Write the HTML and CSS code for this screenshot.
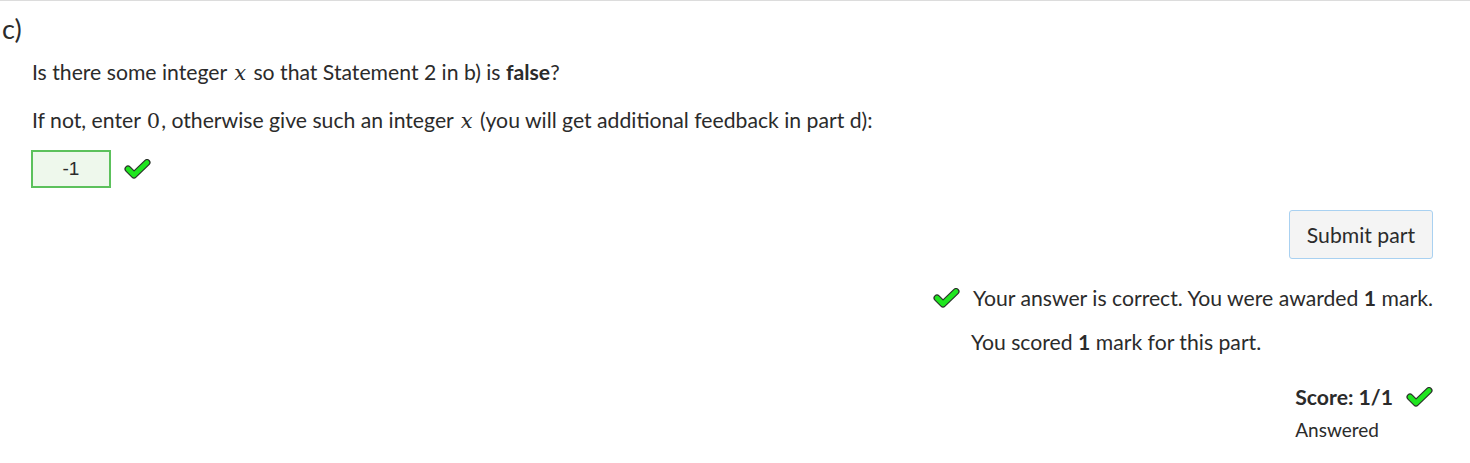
FILE: index.html
```html
<!DOCTYPE html>
<html>
<head>
<meta charset="utf-8">
<link rel="stylesheet" href="styles.css">
</head>
<body>
<div class="part">
  <h3 class="part-name">c)</h3>
  <div class="prompt">
    <p class="para">Is there some integer <span class="math">x</span> so that Statement 2 in b) is <b>false</b>?</p>
    <p class="para">If not, enter <span class="math up">0</span>, otherwise give such an integer <span class="math">x</span> (you will get additional feedback in part d):</p>
    <div class="answer-row">
      <div class="answer-box">-1</div>
      <svg class="tick" width="27" height="20" viewBox="0 0 27 20"><polyline points="4,10 10,16 23,3.5" fill="none" stroke="#2b332b" stroke-width="7" stroke-linecap="round" stroke-linejoin="round"/><polyline points="4,10 10,16 23,3.5" fill="none" stroke="#1fe61f" stroke-width="4.6" stroke-linecap="round" stroke-linejoin="round"/></svg>
    </div>
  </div>
  <div class="submit-row">
    <button class="submit">Submit part</button>
  </div>
  <div class="feedback">
    <div class="fb-line">
      <svg class="tick" width="27" height="20" viewBox="0 0 27 20"><polyline points="4,10 10,16 23,3.5" fill="none" stroke="#2b332b" stroke-width="7" stroke-linecap="round" stroke-linejoin="round"/><polyline points="4,10 10,16 23,3.5" fill="none" stroke="#1fe61f" stroke-width="4.6" stroke-linecap="round" stroke-linejoin="round"/></svg>
      <span>Your answer is correct. You were awarded <b>1</b> mark.</span>
    </div>
    <div class="fb-line second"><span>You scored <b>1</b> mark for this part.</span></div>
  </div>
  <div class="score">
    <div class="score-inner">
      <div class="score-line"><b>Score: 1/1</b>
        <svg class="tick" width="27" height="20" viewBox="0 0 27 20"><polyline points="4,10 10,16 23,3.5" fill="none" stroke="#2b332b" stroke-width="7" stroke-linecap="round" stroke-linejoin="round"/><polyline points="4,10 10,16 23,3.5" fill="none" stroke="#1fe61f" stroke-width="4.6" stroke-linecap="round" stroke-linejoin="round"/></svg>
      </div>
      <div class="answered">Answered</div>
    </div>
  </div>
</div>
</body>
</html>
```
FILE: styles.css
```css
html, body { margin: 0; padding: 0; background: #fff; }
body {
  font-family: Lato, "Open Sans", sans-serif;
  color: #2b2b2b;
  font-size: 21.2px;
}
.part {
  border-top: 1px solid #dcdcdc;
  padding: 0 37px 0 0;
  display: flex;
  flex-direction: column;
}
.part-name {
  margin: 13px 0 0 2px;
  font-size: 27px;
  font-weight: normal;
  line-height: 30px;
}
.prompt { padding-left: 32px; }
.para { margin: 0; line-height: 30px; white-space: nowrap; }
.para + .para { margin-top: 17px; }
.prompt .para:first-child { margin-top: 13px; }
.math { font-family: "DejaVu Serif", "Liberation Serif", serif; font-style: italic; font-size: 21px; margin: 0 2px; }
.math.up { font-style: normal; margin: 0 1px; }
.answer-row { display: flex; align-items: center; gap: 13px; margin-top: 14px; margin-left: -1px; }
.answer-box {
  width: 76px; height: 34px;
  border: 2px solid #5cc15c;
  background: #eef8ec;
  font-family: "Liberation Sans", Arial, sans-serif;
  font-size: 19px;
  display: flex; align-items: center; justify-content: center;
  box-sizing: content-box;
}
.submit-row { display: flex; justify-content: flex-end; margin-top: 22px; }
.submit {
  font-family: inherit; font-size: 21.2px; color: #2b2b2b;
  background: #f4f4f4;
  border: 1px solid #a9d1f1;
  border-radius: 3px;
  height: 49px; padding: 0 17px;
}
.feedback { display: flex; flex-direction: column; align-items: flex-end; margin-top: 24px; }
.fb-line { display: flex; align-items: center; gap: 13px; line-height: 30px; white-space: nowrap; }
.fb-line.second { margin-top: 14px; width: 462px; }
.score { display: flex; justify-content: flex-end; margin-top: 25px; }
.score-inner { display: flex; flex-direction: column; align-items: flex-start; }
.score-line { display: flex; align-items: center; gap: 13px; line-height: 30px; white-space: nowrap; }
.answered { font-size: 19px; line-height: 24px; margin-top: 6px; white-space: nowrap; }
.tick { display: block; }
```
